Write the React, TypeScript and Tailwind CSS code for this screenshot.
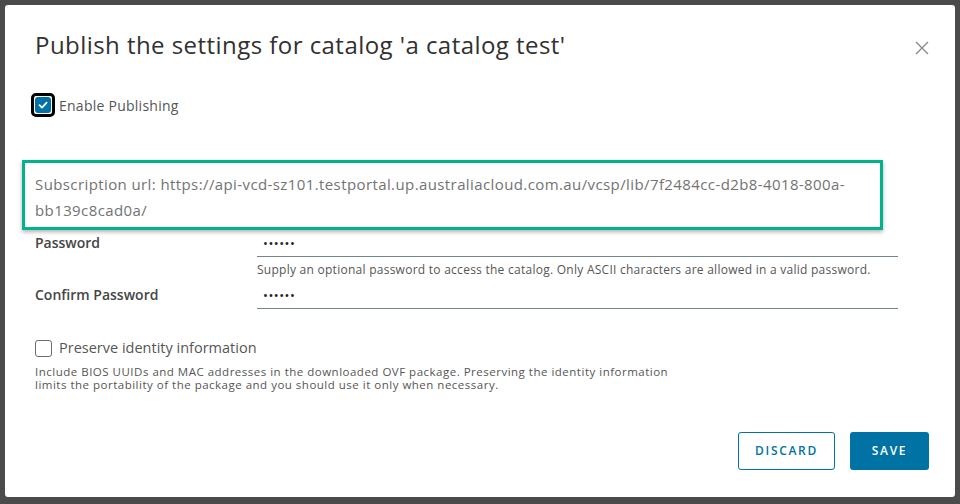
import React from "react";

const font = { fontFamily: '"Open Sans", "Liberation Sans", sans-serif' };

const Check = () => (
  <svg viewBox="0 0 12 12" className="w-[12px] h-[12px]">
    <path d="M2.5 6.2 L5 8.6 L9.6 3.6" fill="none" stroke="white" strokeWidth="1.8" strokeLinecap="round" strokeLinejoin="round" />
  </svg>
);

const FieldRow = ({ label, help }: { label: string; help?: string }) => (
  <div className="flex items-start">
    <div className="w-[222px] text-[14px] font-semibold text-[#454545] leading-[20px] pt-[1px]">{label}</div>
    <div className="flex-1">
      <div className="h-[25px] border-b border-[#74858e] pl-[6px] text-[13px] tracking-[0.5px] text-[#222] leading-[22px]">
        ••••••
      </div>
      {help && (
        <div className="text-[12px] tracking-[0.26px] text-[#565656] leading-[18px] mt-[4px] whitespace-nowrap">{help}</div>
      )}
    </div>
  </div>
);

export default function App() {
  return (
    <div className="w-[960px] h-[504px] bg-[#4b4b4b] p-[5px] overflow-hidden" style={font}>
      <div className="w-[950px] h-[492px] bg-white rounded-[3px] flex flex-col pl-[30px] pr-[26px]">
        <div className="flex items-start justify-between pt-[22px]">
          <h1 className="text-[24px] text-[#313131] leading-[36px] tracking-[0.45px]">
            Publish the settings for catalog 'a catalog test'
          </h1>
          <button className="mt-[13px] mr-[-1px] w-[16px] h-[16px] flex items-center justify-center">
            <svg viewBox="0 0 14 14" className="w-[14px] h-[14px]">
              <path d="M1 1 L13 13 M13 1 L1 13" stroke="#8a8a8a" strokeWidth="1.4" fill="none" />
            </svg>
          </button>
        </div>

        <label className="flex items-center mt-[30px] ml-[-4px]">
          <span className="w-[24px] h-[24px] rounded-[5px] border-[3px] border-black flex items-center justify-center">
            <span className="w-[16px] h-[16px] rounded-[3px] bg-[#0072a3] flex items-center justify-center">
              <Check />
            </span>
          </span>
          <span className="ml-[4px] text-[14px] tracking-[0.25px] text-[#565656]">Enable Publishing</span>
        </label>

        <div className="mt-[43px] ml-[-13px] w-[861px] border-[3px] border-[#00b38a] shadow-[0_2px_4px_rgba(0,0,0,0.3)] px-[10px] pt-[8px] pb-[4px] text-[15px] tracking-[0.4px] text-[#737373] leading-[26px]">
          <div className="whitespace-nowrap">
            Subscription url: https://api-vcd-sz101.testportal.up.australiacloud.com.au/vcsp/lib/7f2484cc-d2b8-4018-800a-
          </div>
          <div>bb139c8cad0a/</div>
        </div>

        <div className="mt-[2px] flex flex-col gap-[5px] w-[863px]">
          <FieldRow
            label="Password"
            help="Supply an optional password to access the catalog. Only ASCII characters are allowed in a valid password."
          />
          <FieldRow label="Confirm Password" />
        </div>

        <label className="flex items-center mt-[29px]">
          <span className="w-[17px] h-[17px] rounded-[3px] border border-[#6b6b6b] bg-white" />
          <span className="ml-[7px] text-[14.5px] text-[#565656] leading-[20px]">Preserve identity information</span>
        </label>
        <div className="mt-[7px] text-[11.5px] tracking-[0.5px] text-[#565656] leading-[13px] whitespace-nowrap">
          <div className="h-[13px]">
            Include BIOS UUIDs and MAC addresses in the downloaded OVF package. Preserving the identity information
          </div>
          <div className="h-[13px]">limits the portability of the package and you should use it only when necessary.</div>
        </div>

        <div className="mt-auto mb-[27px] flex justify-end gap-[15px]">
          <button className="w-[97px] h-[38px] rounded-[3px] border border-[#0072a3] text-[#0072a3] text-[12px] font-semibold tracking-[0.14em]">
            DISCARD
          </button>
          <button className="w-[79px] h-[38px] rounded-[3px] bg-[#0072a3] text-white text-[12px] font-semibold tracking-[0.14em]">
            SAVE
          </button>
        </div>
      </div>
    </div>
  );
}
